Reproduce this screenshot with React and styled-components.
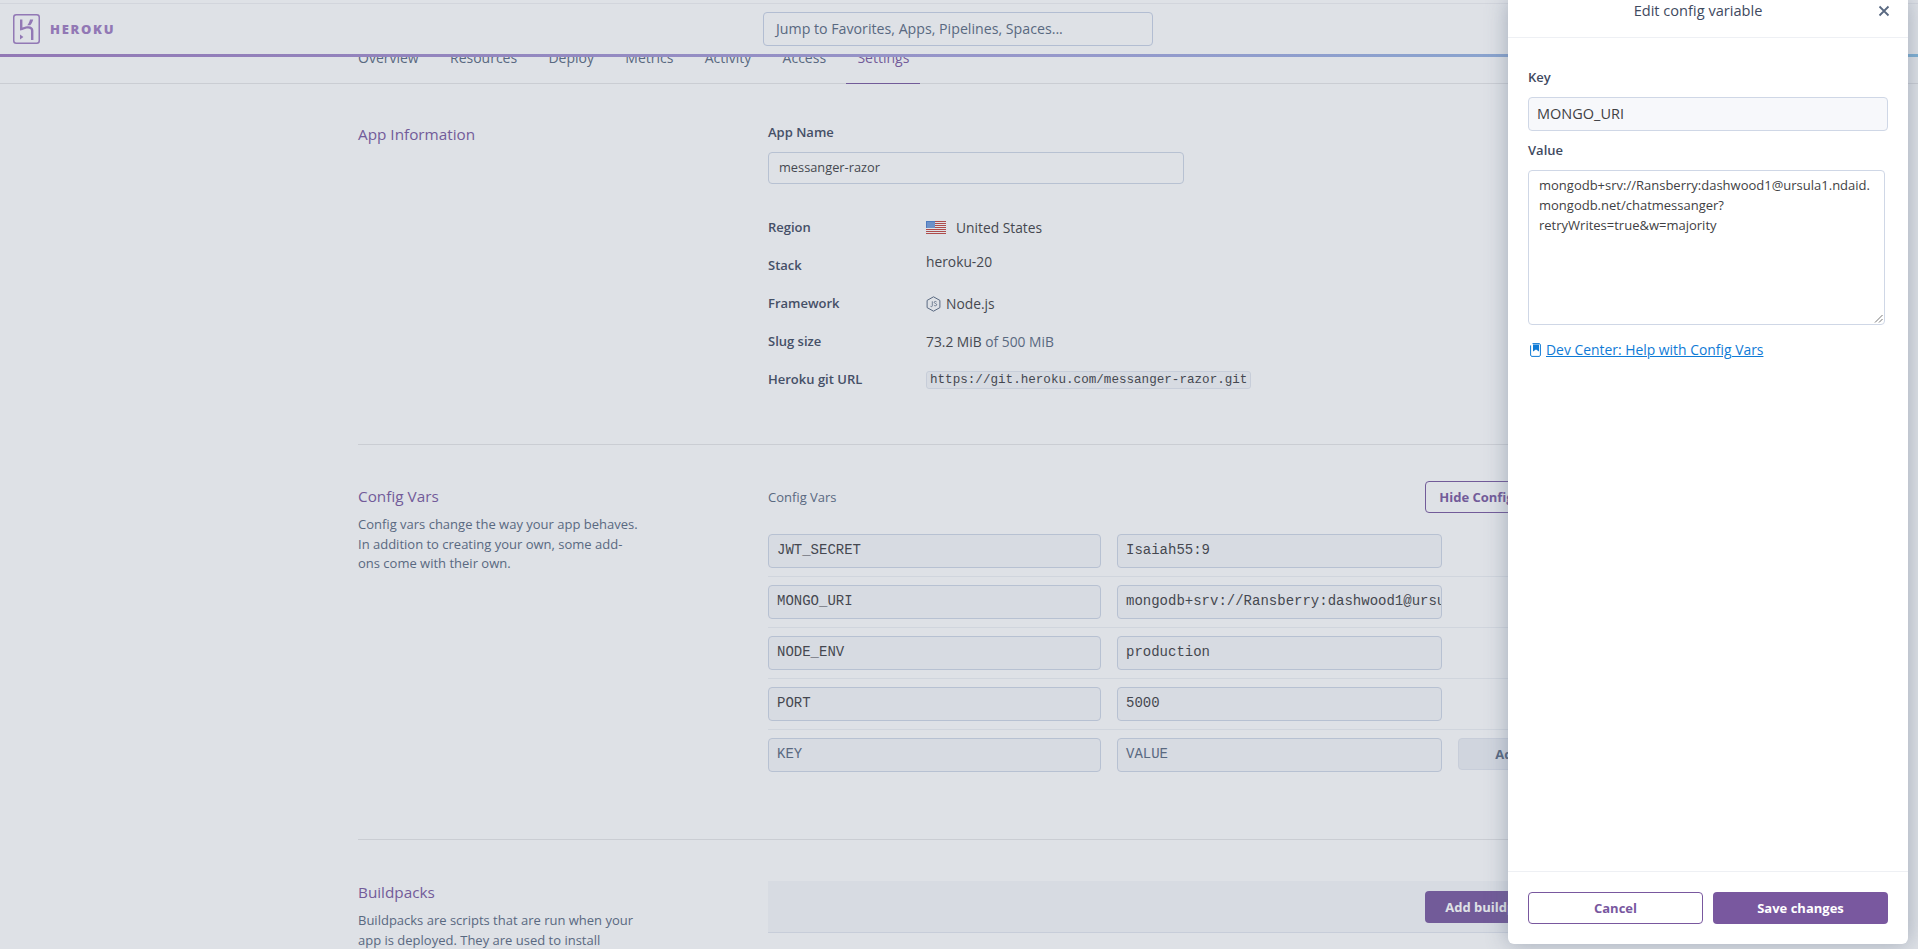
import React from 'react';
import styled, { createGlobalStyle } from 'styled-components';

const PURPLE = '#79589f';
const SOFT_PURPLE = '#a07cc2';
const SANS = '"Open Sans", "Noto Sans", sans-serif';
const MONO = '"Liberation Mono", monospace';

const GlobalStyle = createGlobalStyle`
  html, body {
    margin: 0;
    height: 100%;
    overflow: hidden;
    background: #fff;
    font-family: ${SANS};
    color: #3f3f44;
  }
  * { box-sizing: border-box; }
`;

const Shell = styled.div`
  position: relative;
  height: 949px;
  overflow: hidden;
`;

const TopBar = styled.header`
  position: absolute;
  top: 0;
  left: 0;
  right: 0;
  height: 57px;
  z-index: 2;
  background: #fff;
  border-top: 3px solid #fff;
  display: flex;
  align-items: center;
  justify-content: center;
  box-shadow: inset 0 1px 0 #f0f1f3;
  &::after {
    content: '';
    position: absolute;
    left: 0;
    right: 0;
    bottom: 0;
    height: 3px;
    background: linear-gradient(90deg, #a07cc2, #a5a4de 55%, #86c0e6);
  }
`;

const Brand = styled.div`
  position: absolute;
  left: 13px;
  top: 11px;
  display: flex;
  align-items: center;
  gap: 10px;
  font-size: 13px;
  font-weight: 800;
  letter-spacing: 1.7px;
  color: ${SOFT_PURPLE};
`;

const SearchBox = styled.div`
  width: 390px;
  height: 34px;
  margin: -2px 2px 0 0;
  border: 1px solid #c8d2e6;
  border-radius: 4px;
  padding: 0 12px;
  font-size: 14.2px;
  line-height: 32px;
  color: #596981;
  background: #fff;
`;

const TabRow = styled.nav`
  height: 84px;
  border-bottom: 1px solid #e7e7e8;
`;

const TabInner = styled.div`
  width: 1202px;
  margin: 0 auto;
  height: 100%;
  display: flex;
  align-items: flex-end;
  gap: 9.3px;
`;

const Tab = styled.a`
  height: 36px;
  padding: 0 11px;
  font-size: 14px;
  line-height: 19px;
  margin-bottom: -1px;
  margin-left: ${p => (p.$first ? '-11px' : '0')};
  color: ${p => (p.$active ? PURPLE : '#596981')};
  border-bottom: 1px solid ${p => (p.$active ? PURPLE : 'transparent')};
`;

const Main = styled.main`
  width: 1202px;
  margin: 0 auto;
`;

const Section = styled.section`
  display: grid;
  grid-template-columns: 410px 1fr;
  padding: ${p => p.$pad};
  border-bottom: ${p => (p.$last ? 'none' : '1px solid #e7e7e8')};
`;

const SideColumn = styled.div`
  padding-top: ${p => p.$top || '0'};
`;

const SectionTitle = styled.h3`
  margin: 0;
  font-size: 15.3px;
  font-weight: 400;
  line-height: 22px;
  color: ${PURPLE};
`;

const SectionText = styled.p`
  margin: 8px 0 0;
  width: 282px;
  font-size: 13px;
  line-height: 19.5px;
  color: #596981;
`;

const FieldLabel = styled.div`
  font-size: 13px;
  font-weight: 600;
  line-height: 18px;
  color: #3f4a5f;
`;

const NameInput = styled.div`
  width: 416px;
  height: 32px;
  margin-top: 11px;
  border: 1px solid #cfd7e6;
  border-radius: 4px;
  padding: 0 10px;
  font-size: 12.8px;
  line-height: 29px;
  color: #3f3f44;
  background: #fff;
`;

const InfoGrid = styled.dl`
  margin: 24px 0 0;
  display: grid;
  grid-template-columns: 158px 1fr;
  grid-auto-rows: 38px;
  align-items: center;
`;

const InfoKey = styled.dt`
  font-size: 13px;
  font-weight: 600;
  color: #3f4a5f;
`;

const InfoValue = styled.dd`
  margin: ${p => (p.$raised ? '-7px' : '1px')} 0 0;
  display: flex;
  align-items: center;
  gap: ${p => p.$gap || '5px'};
  font-size: 13.8px;
  color: #3f3f44;
`;

const Muted = styled.span`
  color: #596981;
`;

const CodeChip = styled.code`
  height: 18px;
  padding: 0 3px;
  font-family: ${MONO};
  font-size: 12.6px;
  line-height: 16px;
  color: #3f3f44;
  background: #f7f8fb;
  border: 1px solid #e3e7ef;
  border-radius: 3px;
`;

const VarsHead = styled.div`
  display: flex;
  align-items: center;
  justify-content: space-between;
  height: 31px;
  margin-bottom: 22px;
  font-size: 13px;
  color: #596981;
`;

const OutlineButton = styled.button`
  width: ${p => p.$w || 'auto'};
  height: 32px;
  padding: 0;
  font-family: ${SANS};
  font-size: 13px;
  font-weight: 700;
  color: ${PURPLE};
  background: #fff;
  border: 1px solid ${PURPLE};
  border-radius: 4px;
`;

const SolidButton = styled.button`
  width: ${p => p.$w || 'auto'};
  height: 32px;
  padding: 0;
  font-family: ${SANS};
  font-size: 13px;
  font-weight: 700;
  color: #fff;
  background: ${PURPLE};
  border: 0;
  border-radius: 4px;
`;

const VarRow = styled.div`
  display: grid;
  grid-template-columns: 333px 325px 100px;
  column-gap: 16px;
  height: ${p => (p.$first ? '43px' : '51px')};
  padding-top: ${p => (p.$first ? '0' : '8px')};
  border-bottom: ${p => (p.$last ? 'none' : '1px solid #eef0f4')};
`;

const VarInput = styled.div`
  height: 34px;
  border: 1px solid #cfd7e6;
  border-radius: 4px;
  padding: 0 8px;
  font-family: ${MONO};
  font-size: 14px;
  line-height: 30px;
  white-space: nowrap;
  overflow: hidden;
  color: ${p => (p.$placeholder ? '#596981' : '#3f3f44')};
  background: #f7f8fb;
`;

const AddButton = styled.button`
  height: 32px;
  padding: 0;
  font-family: ${SANS};
  font-size: 13px;
  font-weight: 700;
  color: #596981;
  background: #eef1f6;
  border: 1px solid #e3e7ef;
  border-radius: 4px;
`;

const PackBar = styled.div`
  height: 52px;
  padding: 10px 2px 0 0;
  display: flex;
  justify-content: flex-end;
  background: #f7f8fb;
  border-bottom: 1px solid #e3e7ef;
`;

const Scrim = styled.div`
  position: absolute;
  inset: 0;
  z-index: 3;
  background: rgba(89, 105, 129, 0.2);
`;

const Drawer = styled.aside`
  position: absolute;
  top: 0;
  right: 10px;
  width: 400px;
  height: 944px;
  z-index: 4;
  display: flex;
  flex-direction: column;
  background: #fff;
  border-radius: 0 0 6px 6px;
  box-shadow: 0 0 22px rgba(89, 105, 129, 0.45);
`;

const DrawerHead = styled.div`
  position: relative;
  height: 38px;
  padding: 0 20px 0 0;
  text-align: center;
  font-size: 14.6px;
  line-height: 21px;
  color: #3f4a5f;
  border-bottom: 1px solid #eef0f4;
`;

const CloseIcon = styled.svg`
  position: absolute;
  right: 18px;
  top: 5px;
  width: 12px;
  height: 12px;
`;

const DrawerBody = styled.div`
  flex: 1;
  padding: 30px 20px 0;
`;

const KeyField = styled.div`
  height: 34px;
  margin: 11px 0 10px;
  border: 1px solid #cfd7e6;
  border-radius: 4px;
  padding: 0 8px;
  font-size: 14.5px;
  line-height: 32px;
  color: #3f3f44;
  background: #f7f8fb;
`;

const ValueField = styled.div`
  position: relative;
  width: 357px;
  height: 155px;
  margin-top: 11px;
  border: 1px solid #cfd7e6;
  border-radius: 4px;
  padding: 4px 10px;
  font-size: 13px;
  line-height: 20px;
  color: #3f3f44;
  white-space: nowrap;
`;

const Grip = styled.svg`
  position: absolute;
  right: 1px;
  bottom: 1px;
  width: 9px;
  height: 9px;
`;

const HelpLink = styled.a`
  display: flex;
  align-items: center;
  gap: 5px;
  margin-top: 16px;
  padding-left: 2px;
  font-size: 13.9px;
  line-height: 18px;
  color: #0f7bd6;
  text-decoration: underline;
`;

const DrawerFoot = styled.div`
  height: 73px;
  padding: 20px 20px 0;
  display: flex;
  gap: 10px;
  border-top: 1px solid #eef0f4;
`;

const HerokuLogo = () => (
  <svg width="27" height="30" viewBox="0 0 27 30" fill="none">
    <rect x="0.75" y="0.75" width="25.5" height="28.5" rx="2.5" stroke={SOFT_PURPLE} strokeWidth="1.5" />
    <path d="M7 5.5h2.4v8c2.4-.9 4.4-1.3 6-1.3 3 0 5 1.6 5 4.3v9.5H18v-9.2c0-1.4-1.1-2.3-2.9-2.3-1.8 0-4.4.7-5.7 1.4L7 16.4z" fill={SOFT_PURPLE} />
    <path d="M17 5.5h3.2c-.5 2.1-1.5 4-3 5.8h-3c1.5-1.8 2.4-3.7 2.8-5.8zM7 20.5l3.4 2.5L7 25.5z" fill={SOFT_PURPLE} />
  </svg>
);

const UsFlag = () => (
  <svg width="20" height="13" viewBox="0 0 20 13">
    <rect width="20" height="13" fill="#fff" />
    {[0, 2, 4, 6, 8, 10, 12].map(y => (
      <rect key={y} y={y} width="20" height="1" fill="#c4453f" />
    ))}
    <rect width="9" height="7" fill="#4a80d0" />
    {[1.5, 3.5, 5.5].map(y =>
      [1.5, 3.5, 5.5, 7.5].map(x => <rect key={`${x}-${y}`} x={x} y={y} width="1" height="1" fill="#e8eefa" />)
    )}
  </svg>
);

const NodeIcon = () => (
  <svg width="15" height="16" viewBox="0 0 15 16" fill="none">
    <path d="M7.5.8l6.4 3.6v7.2l-6.4 3.6-6.4-3.6V4.4z" stroke="#596981" />
    <path d="M6.3 5.3v4.6c0 .9-1.3.9-1.8.4M10.6 6c-.4-.7-2.3-.9-2.4.3-.1 1.4 2.6.9 2.5 2.5-.1 1.3-2.3 1.2-2.8.3" stroke="#596981" strokeWidth=".8" />
  </svg>
);

const DocIcon = () => (
  <svg width="11" height="14" viewBox="0 0 11 14" fill="none">
    <path d="M2.5.6h6.6c.7 0 1.3.6 1.3 1.3v10.2c0 .7-.6 1.3-1.3 1.3H2c-.8 0-1.4-.6-1.4-1.3V2.4" stroke="#0f7bd6" />
    <path d="M3 1.5h6v7L6 6.4 3 8.5z" fill="#0f7bd6" />
  </svg>
);

const VARS = [
  ['JWT_SECRET', 'Isaiah55:9'],
  ['MONGO_URI', 'mongodb+srv://Ransberry:dashwood1@ursula1.ndaid.mongodb.net/chatmessanger?retryWrites=true&w=majority'],
  ['NODE_ENV', 'production'],
  ['PORT', '5000'],
];

const TABS = ['Overview', 'Resources', 'Deploy', 'Metrics', 'Activity', 'Access', 'Settings'];

export default function App() {
  return (
    <Shell>
      <GlobalStyle />
      <TopBar>
        <Brand>
          <HerokuLogo />
          <span>HEROKU</span>
        </Brand>
        <SearchBox>Jump to Favorites, Apps, Pipelines, Spaces...</SearchBox>
      </TopBar>

      <TabRow>
        <TabInner>
          {TABS.map((t, i) => (
            <Tab key={t} $first={i === 0} $active={t === 'Settings'}>{t}</Tab>
          ))}
        </TabInner>
      </TabRow>

      <Main>
        <Section $pad="39px 0 46px">
          <SectionTitle>App Information</SectionTitle>
          <div>
            <FieldLabel>App Name</FieldLabel>
            <NameInput>messanger-razor</NameInput>
            <InfoGrid>
              <InfoKey>Region</InfoKey>
              <InfoValue $gap="10px"><UsFlag />United States</InfoValue>
              <InfoKey>Stack</InfoKey>
              <InfoValue $raised>heroku-20</InfoValue>
              <InfoKey>Framework</InfoKey>
              <InfoValue><NodeIcon />Node.js</InfoValue>
              <InfoKey>Slug size</InfoKey>
              <InfoValue><span>73.2 MiB <Muted>of 500 MiB</Muted></span></InfoValue>
              <InfoKey>Heroku git URL</InfoKey>
              <InfoValue><CodeChip>https://git.heroku.com/messanger-razor.git</CodeChip></InfoValue>
            </InfoGrid>
          </div>
        </Section>

        <Section $pad="36px 0 58px">
          <SideColumn $top="4px">
            <SectionTitle>Config Vars</SectionTitle>
            <SectionText>Config vars change the way your app behaves. In addition to creating your own, some add-ons come with their own.</SectionText>
          </SideColumn>
          <div>
            <VarsHead>
              Config Vars
              <OutlineButton $w="135px">Hide Config Vars</OutlineButton>
            </VarsHead>
            {VARS.map(([k, v], i) => (
              <VarRow key={k} $first={i === 0}>
                <VarInput>{k}</VarInput>
                <VarInput $value>{v}</VarInput>
              </VarRow>
            ))}
            <VarRow $last>
              <VarInput $placeholder>KEY</VarInput>
              <VarInput $placeholder $value>VALUE</VarInput>
              <AddButton>Add</AddButton>
            </VarRow>
          </div>
        </Section>

        <Section $pad="41px 0 0" $last>
          <SideColumn>
            <SectionTitle>Buildpacks</SectionTitle>
            <SectionText>Buildpacks are scripts that are run when your app is deployed. They are used to install</SectionText>
          </SideColumn>
          <PackBar>
            <SolidButton $w="133px">Add buildpack</SolidButton>
          </PackBar>
        </Section>
      </Main>

      <Scrim />

      <Drawer>
        <DrawerHead>
          Edit config variable
          <CloseIcon viewBox="0 0 12 12" fill="none">
            <path d="M1.5 1.5l9 9M10.5 1.5l-9 9" stroke="#596981" strokeWidth="1.8" />
          </CloseIcon>
        </DrawerHead>
        <DrawerBody>
          <FieldLabel>Key</FieldLabel>
          <KeyField>MONGO_URI</KeyField>
          <FieldLabel>Value</FieldLabel>
          <ValueField>
            mongodb+srv://Ransberry:dashwood1@ursula1.ndaid.<br />
            mongodb.net/chatmessanger?<br />
            retryWrites=true&amp;w=majority
            <Grip viewBox="0 0 9 9" fill="none">
              <path d="M1 8.5L8.5 1M5 8.5L8.5 5" stroke="#777" />
            </Grip>
          </ValueField>
          <HelpLink><DocIcon />Dev Center: Help with Config Vars</HelpLink>
        </DrawerBody>
        <DrawerFoot>
          <OutlineButton $w="175px">Cancel</OutlineButton>
          <SolidButton $w="175px">Save changes</SolidButton>
        </DrawerFoot>
      </Drawer>
    </Shell>
  );
}
